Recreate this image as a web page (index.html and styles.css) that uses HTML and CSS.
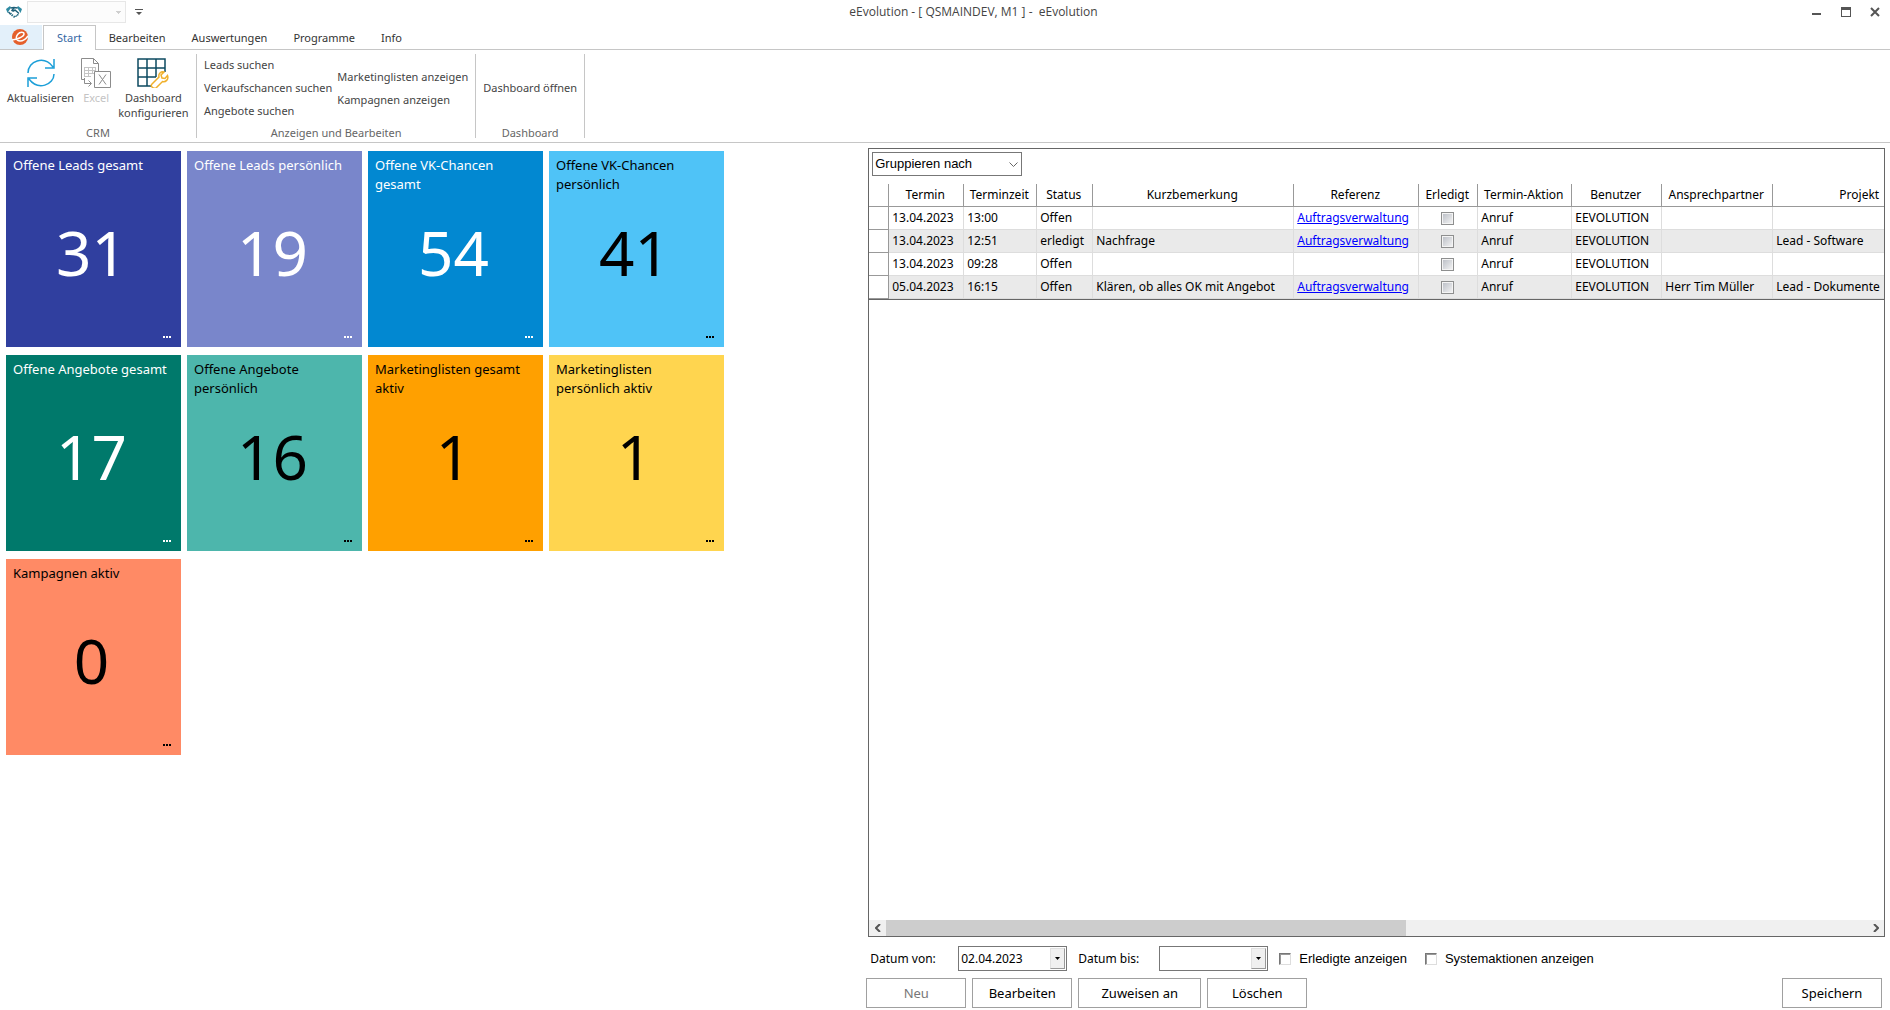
FILE: index.html
```html
<!DOCTYPE html>
<html lang="de">
<head>
<meta charset="utf-8">
<title>eEvolution</title>
<link rel="stylesheet" href="styles.css">
</head>
<body>
<header class="titlebar">
  <div class="quick">
    <svg class="quick-logo" width="16" height="12" viewBox="0 0 16 12" fill="none">
      <path d="M0 3 4 0l1 1.500L1.500 7zM16 3l-4-3-1 1.500L14.500 7z" fill="#2f8ba3"/>
      <path d="M4.500 2 8 1.500 11.500 2M8 2 6 4.500c1 1 2 .5 3-.5l4 3.500M2.500 6l2 2" stroke="#1f5f78" stroke-width="1.500"/>
      <path d="M4 8.500l1.500-1.500M5.500 10 7 8.500M7.500 11.500 9 10M9.500 10.500l1.500-1M11 9l1.500-.5" stroke="#2c6f86" stroke-width="1.500"/>
    </svg>
    <select class="quick-select" aria-label="Schnellauswahl" disabled></select>
    <button class="quick-more" aria-label="Weitere Befehle">
      <svg width="8" height="6" viewBox="0 0 8 6"><path d="M0 0h8v1H0zM1 3h6L4 6z" fill="#555"/></svg>
    </button>
  </div>
  <h1 class="window-title">eEvolution - [ QSMAINDEV, M1 ] -&nbsp; eEvolution</h1>
  <div class="window-buttons">
    <button aria-label="Minimieren"><svg width="10" height="10" viewBox="0 0 10 10"><path d="M0 6h9v2H0z" fill="#555"/></svg></button>
    <button aria-label="Maximieren"><svg width="10" height="10" viewBox="0 0 10 10"><path d="M0 0h10v10H0zM1 3v6h8V3z" fill="#555" fill-rule="evenodd"/></svg></button>
    <button aria-label="Schließen"><svg width="10" height="10" viewBox="0 0 10 10"><path d="M1 1l8 8M9 1L1 9" stroke="#555" stroke-width="2"/></svg></button>
  </div>
</header>

<nav class="tabs">
  <a class="tab-app" href="#app" aria-label="Anwendung">
    <svg width="16" height="16" viewBox="0 0 16 16" fill="none"><circle cx="8" cy="8" r="8" fill="#e5602c"/><path d="M0 11C4 10.500 12 8 12 5c0-2.500-4-2.500-6.200.2C3 8.500 4.500 12 8 12c3 0 6-2 8-5" stroke="#fff" stroke-width="1.500"/></svg>
  </a>
  <a class="tab tab-active" href="#start">Start</a>
  <a class="tab" href="#bearbeiten">Bearbeiten</a>
  <a class="tab" href="#auswertungen">Auswertungen</a>
  <a class="tab" href="#programme">Programme</a>
  <a class="tab" href="#info">Info</a>
</nav>

<section class="ribbon">
  <div class="group group-crm">
    <div class="group-body">
      <button class="big">
        <svg width="28" height="30" viewBox="0 0 28 30" fill="none" stroke="#1c9fd8" stroke-width="1.500"><path d="M1 15C1 3 17-3 26 9M27 1v9h-9M27 16C27 27 11 33 2 21M1 29v-9h9"/></svg>
        <span>Aktualisieren</span>
      </button>
      <button class="big" disabled>
        <svg width="30" height="30" viewBox="0 0 30 30" fill="none" stroke="#8c8c8c"><path d="M3 21.500H.5V.5h12l5 5v8M12.500.5v5h5"/><path d="M3 9.500h12M3 12.500h12M3 15.500h10M3 18.500h7M3.500 9v10M7.500 9v10M11.500 9v7M14.500 9v4" stroke="#c4c4c4"/><path d="M3.500 20v5.500H10M7.500 22.500l3 3-3 3"/><path d="M13.500 13.500h16v16h-16zM18 16.500l7 10M25 16.500l-7 10"/></svg>
        <span>Excel</span>
      </button>
      <button class="big">
        <svg width="32" height="30" viewBox="0 0 32 30" fill="none"><path d="M14 28H1V1h27v13M1 10h27M1 19h18M10 1v27M19 1v18" stroke="#0c4a60" stroke-width="1.500"/><path d="M15 29c-1-1-1-2 0-3l7-7c-1-3 2-6 5-5l-3 3 1 3 3 .5 2.500-3c1.500 4-2 7-5 6l-6 6c-1.500 1-3 1-4.500-.5z" fill="#fff" stroke="#f0b02c" stroke-width="1.500"/></svg>
        <span>Dashboard<br>konfigurieren</span>
      </button>
    </div>
    <div class="group-name">CRM</div>
  </div>
  <div class="group">
    <div class="group-body group-links">
      <div class="link-col">
        <button>Leads suchen</button>
        <button>Verkaufschancen suchen</button>
        <button>Angebote suchen</button>
      </div>
      <div class="link-col">
        <button>Marketinglisten anzeigen</button>
        <button>Kampagnen anzeigen</button>
      </div>
    </div>
    <div class="group-name">Anzeigen und Bearbeiten</div>
  </div>
  <div class="group">
    <div class="group-body group-links">
      <div class="link-col">
        <button>Dashboard öffnen</button>
      </div>
    </div>
    <div class="group-name">Dashboard</div>
  </div>
</section>

<main class="workspace">
  <section class="tiles">
    <article class="tile light indigo"><h2>Offene Leads gesamt</h2><p>31</p><button aria-label="Mehr"><i></i><i></i><i></i></button></article>
    <article class="tile light lavender"><h2>Offene Leads persönlich</h2><p>19</p><button aria-label="Mehr"><i></i><i></i><i></i></button></article>
    <article class="tile light blue"><h2>Offene VK-Chancen gesamt</h2><p>54</p><button aria-label="Mehr"><i></i><i></i><i></i></button></article>
    <article class="tile sky"><h2>Offene VK-Chancen persönlich</h2><p>41</p><button aria-label="Mehr"><i></i><i></i><i></i></button></article>
    <article class="tile light green"><h2>Offene Angebote gesamt</h2><p>17</p><button aria-label="Mehr"><i></i><i></i><i></i></button></article>
    <article class="tile teal"><h2>Offene Angebote persönlich</h2><p>16</p><button aria-label="Mehr"><i></i><i></i><i></i></button></article>
    <article class="tile orange"><h2>Marketinglisten gesamt aktiv</h2><p>1</p><button aria-label="Mehr"><i></i><i></i><i></i></button></article>
    <article class="tile yellow"><h2>Marketinglisten persönlich aktiv</h2><p>1</p><button aria-label="Mehr"><i></i><i></i><i></i></button></article>
    <article class="tile coral"><h2>Kampagnen aktiv</h2><p>0</p><button aria-label="Mehr"><i></i><i></i><i></i></button></article>
  </section>

  <section class="schedule">
    <div class="grid-panel">
      <div class="grouping">
        <select aria-label="Gruppieren nach"><option>Gruppieren nach</option></select>
        <svg class="chevron" width="9" height="6" viewBox="0 0 9 6"><path d="M.5.500l4 4 4-4" fill="none" stroke="#666"/></svg>
      </div>
      <div class="grid-scroll">
        <table>
          <colgroup>
            <col class="c-mark"><col class="c-date"><col class="c-time"><col class="c-status"><col class="c-note"><col class="c-ref"><col class="c-done"><col class="c-action"><col class="c-user"><col class="c-contact"><col class="c-project">
          </colgroup>
          <thead>
            <tr><th></th><th>Termin</th><th>Terminzeit</th><th>Status</th><th>Kurzbemerkung</th><th>Referenz</th><th>Erledigt</th><th>Termin-Aktion</th><th>Benutzer</th><th>Ansprechpartner</th><th>Projekt</th></tr>
          </thead>
          <tbody>
            <tr><td></td><td>13.04.2023</td><td>13:00</td><td>Offen</td><td></td><td><a href="#auftrag">Auftragsverwaltung</a></td><td><input type="checkbox" aria-label="Erledigt"></td><td>Anruf</td><td>EEVOLUTION</td><td></td><td></td></tr>
            <tr><td></td><td>13.04.2023</td><td>12:51</td><td>erledigt</td><td>Nachfrage</td><td><a href="#auftrag">Auftragsverwaltung</a></td><td><input type="checkbox" aria-label="Erledigt"></td><td>Anruf</td><td>EEVOLUTION</td><td></td><td>Lead - Software</td></tr>
            <tr><td></td><td>13.04.2023</td><td>09:28</td><td>Offen</td><td></td><td></td><td><input type="checkbox" aria-label="Erledigt"></td><td>Anruf</td><td>EEVOLUTION</td><td></td><td></td></tr>
            <tr><td></td><td>05.04.2023</td><td>16:15</td><td>Offen</td><td>Klären, ob alles OK mit Angebot</td><td><a href="#auftrag">Auftragsverwaltung</a></td><td><input type="checkbox" aria-label="Erledigt"></td><td>Anruf</td><td>EEVOLUTION</td><td>Herr Tim Müller</td><td>Lead - Dokumente</td></tr>
          </tbody>
        </table>
      </div>
      <div class="scrollbar">
        <button aria-label="Nach links"><svg width="6" height="8" viewBox="0 0 6 8"><path d="M5 0L1 4l4 4" fill="none" stroke="#555" stroke-width="2"/></svg></button>
        <div class="track"><div class="thumb"></div></div>
        <button aria-label="Nach rechts"><svg width="6" height="8" viewBox="0 0 6 8"><path d="M1 0l4 4-4 4" fill="none" stroke="#555" stroke-width="2"/></svg></button>
      </div>
    </div>

    <div class="filters">
      <label class="date-label" for="from">Datum von:</label>
      <div class="date"><input id="from" type="text" value="02.04.2023"><button aria-label="Kalender"><svg width="5" height="3" viewBox="0 0 5 3"><path d="M0 0h5L2.500 3z"/></svg></button></div>
      <label class="date-label" for="to">Datum bis:</label>
      <div class="date"><input id="to" type="text"><button aria-label="Kalender"><svg width="5" height="3" viewBox="0 0 5 3"><path d="M0 0h5L2.500 3z"/></svg></button></div>
      <label class="check"><input type="checkbox">Erledigte anzeigen</label>
      <label class="check"><input type="checkbox">Systemaktionen anzeigen</label>
    </div>

    <div class="actions">
      <button disabled>Neu</button>
      <button>Bearbeiten</button>
      <button class="wide">Zuweisen an</button>
      <button>Löschen</button>
      <button class="save">Speichern</button>
    </div>
  </section>
</main>
</body>
</html>
```
FILE: styles.css
```css
* { box-sizing: border-box; }

body {
  margin: 0;
  min-height: 100vh;
  display: flex;
  flex-direction: column;
  background: #fff;
  color: #000;
  font: 12px/16px "Noto Sans", sans-serif;
}

button {
  padding: 0;
  border: 0;
  background: none;
  color: inherit;
  font: inherit;
}

svg { display: block; }

/* Title bar */
.titlebar { display: flex; align-items: center; height: 25px; padding-bottom: 2px; color: #444; }
.quick { display: flex; align-items: center; width: 144px; padding-left: 6px; }
.quick-select {
  appearance: none;
  width: 99px;
  height: 22px;
  margin: 0 9px 0 5px;
  border: 1px solid #ddd;
  border-radius: 0;
  background: linear-gradient(#bbb, #bbb) no-repeat 88px 9px / 5px 1px, linear-gradient(#bbb, #bbb) no-repeat 89px 10px / 3px 1px, linear-gradient(#bbb, #bbb) no-repeat 90px 11px / 1px 1px, #fcfcfc;
}
.window-title { flex: 1; margin: 0; font-family: "Open Sans", sans-serif; font-size: 12px; font-weight: 400; text-align: center; }
.window-buttons { display: flex; gap: 19px; width: 87px; padding-left: 9px; }

/* Tabs */
.tabs { display: flex; height: 25px; border-bottom: 1px solid #c6c6c6; font-size: 11px; }
.tabs a { color: #333; text-decoration: none; }
.tab-app { display: flex; align-items: center; justify-content: center; width: 42px; padding: 0 2px 1px 0; background: #e3f0fa; }
.tab { height: 25px; padding: 5px 13px; }
.tabs .tab-active { margin-left: 1px; padding: 4px 13px; border: 1px solid #c6c6c6; border-bottom: 0; background: #fff; color: #3468a4; }

/* Ribbon */
.ribbon { display: flex; height: 93px; padding: 4px 0; border-bottom: 1px solid #c6c6c6; font-size: 11px; color: #444; }
.group { display: flex; flex-direction: column; height: 84px; padding: 0 7px; border-right: 1px solid #c6c6c6; }
.group-crm { width: 197px; }
.group-body { display: flex; flex: 1; height: 74px; }
.group-name { line-height: 10px; color: #666; text-align: center; }
.big { display: flex; flex-direction: column; align-items: center; gap: 2px; padding-top: 4px; line-height: 15px; white-space: nowrap; }
.group-crm .group-body { gap: 7px; }
.big:disabled { color: #c4c4c4; }
.group-links { gap: 5px; padding-bottom: 7px; }
.link-col { display: flex; flex-direction: column; justify-content: center; align-items: flex-start; }
.link-col button { line-height: 23px; white-space: nowrap; }

/* Workspace */
.workspace { flex: 1; display: grid; grid-template-columns: minmax(0, 11fr) minmax(0, 13fr); }

.tiles {
  display: grid;
  grid-template-columns: repeat(4, 175px);
  grid-auto-rows: 196px;
  gap: 8px 6px;
  align-content: start;
  padding: 8px 6px;
}
.tile { display: grid; grid-template-rows: 48px 1fr 24px; padding: 5px 7px 6px; }
.tile h2 { margin: 0; font-size: 13px; font-weight: 400; line-height: 19px; }
.tile p { margin: 0; padding-right: 4px; font-size: 62px; line-height: 96px; text-align: center; }
.tile button { display: flex; gap: 1px; align-self: end; justify-self: end; padding: 3px; }
.tile i { width: 2px; height: 2px; background: currentColor; }
.light { color: #fff; }
.indigo { background: #303f9f; }
.lavender { background: #7986cb; }
.blue { background: #0288d1; }
.sky { background: #4fc3f7; }
.green { background: #00796b; }
.teal { background: #4db6ac; }
.orange { background: #ffa000; }
.yellow { background: #ffd54f; }
.coral { background: #ff8a65; }

/* Appointment grid */
.schedule { display: flex; flex-direction: column; padding: 5px 5px 2px 0; }
.grid-panel { flex: 1; display: flex; flex-direction: column; margin-left: 2px; border: 1px solid #666; }
.grouping { position: relative; width: 150px; margin: 3px; }
.grouping select {
  appearance: none;
  display: block;
  width: 100%;
  height: 24px;
  padding: 0 2px 2px;
  border: 1px solid #777;
  border-radius: 0;
  background: #fff;
  color: #000;
  font: 13px "Liberation Sans", sans-serif;
}
.chevron { position: absolute; right: 4px; top: 10px; pointer-events: none; }
.grid-scroll { flex: 1; overflow: hidden; margin-top: 5px; }

table { width: 1079px; table-layout: fixed; border-collapse: separate; border-spacing: 0; border-bottom: 1px solid #666; }
.c-mark { width: 20px; }
.c-date { width: 75px; }
.c-time { width: 73px; }
.c-status { width: 56px; }
.c-note { width: 201px; }
.c-ref { width: 125px; }
.c-done { width: 59px; }
.c-action { width: 94px; }
.c-user { width: 90px; }
.c-contact { width: 111px; }
.c-project { width: 175px; }
th, td { height: 23px; padding: 0 3px; overflow: hidden; white-space: nowrap; line-height: 20px; text-align: left; }
th { padding: 0 2px 0 0; border-right: 1px solid #999; border-bottom: 1px solid #999; font-weight: 400; text-align: center; }
td { border-right: 1px solid #ddd; border-bottom: 1px solid #ddd; }
td:first-child { border-color: #999; }
tbody tr:nth-child(even) td:not(:first-child) { background: #eaeaea; }
td a { color: #00f; }
td input {
  appearance: none;
  display: block;
  width: 13px;
  height: 13px;
  margin: 0 19px;
  border: 1px solid #8e8f8f;
  background: linear-gradient(135deg, #b8bcc4, #f6f6f6);
  box-shadow: inset 0 0 0 1px #f4f4f4;
}

.scrollbar { display: flex; height: 16px; background: #f0f0f0; }
.scrollbar button { display: flex; align-items: center; justify-content: center; width: 17px; }
.track { flex: 1; display: flex; }
.thumb { width: 53%; background: #cdcdcd; }

/* Filters and actions */
.filters { display: flex; align-items: center; height: 25px; margin-top: 9px; }
.date-label { width: 88px; margin-left: 4px; padding-top: 1px; }
.date { display: flex; width: 109px; height: 25px; padding: 1px; margin-right: 7px; border: 1px solid #777; }
.date + .date-label { width: 81px; }
.date input { flex: 1; min-width: 0; padding: 0 1px; border: 0; outline: 0; color: #000; font: inherit; }
.date button { display: flex; align-items: center; justify-content: center; width: 15px; border: 1px solid; border-color: #e0e0e0 #999 #999 #e0e0e0; background: #f0f0f0; }
.check { display: flex; align-items: center; gap: 8px; margin: 0 14px 0 4px; padding-top: 1px; font-family: "Liberation Sans", sans-serif; font-size: 13px; }
.check input { appearance: none; width: 12px; height: 12px; margin: 0; border: 1px solid; border-color: #777 #ddd #ddd #777; box-shadow: inset 1px 1px #999; }

.actions { display: flex; gap: 6px; margin-top: 7px; }
.actions button { width: 100px; height: 30px; border: 1px solid #a0a0a0; background: #fff; font-size: 13px; }
.actions .wide { width: 123px; }
.actions .save { margin: 0 3px 0 auto; }
.actions button:disabled { color: #777; }
```
